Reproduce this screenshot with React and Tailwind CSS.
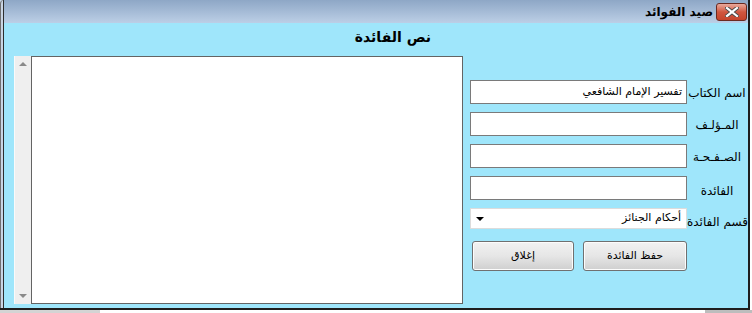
import React from 'react';

const font = { fontFamily: '"DejaVu Sans", "Noto Sans", sans-serif' };

function CloseButton() {
  return (
    <div className="w-[31px] h-[18px] rounded-[3px] border border-[#6b2a20] bg-linear-to-b from-[#e9a99c] via-[#d0563f] to-[#c4442c] flex items-center justify-center">
      <svg width="14" height="10" viewBox="0 0 14 10">
        <path d="M2 1 L12 9 M12 1 L2 9" stroke="#4a4a4a" strokeWidth="4" strokeLinecap="square" />
        <path d="M2 1 L12 9 M12 1 L2 9" stroke="#ffffff" strokeWidth="2.2" strokeLinecap="square" />
      </svg>
    </div>
  );
}

function Field({ label, value, labelClass = '' }) {
  return (
    <div className="flex items-center h-[24px]">
      <div className="w-[217px] shrink-0 h-[24px] border border-[#7a7a7a] bg-white flex items-center justify-end pr-[4px] text-[11px] text-black">
        {value}
      </div>
      <div className={'flex-1 flex justify-center whitespace-nowrap text-[12px] text-black pt-[2px] ' + labelClass}>{label}</div>
    </div>
  );
}

function WinButton({ children, className = '' }) {
  return (
    <div className={'h-[30px] rounded-[3px] border border-[#707070] flex items-center justify-center text-[11px] text-black bg-linear-to-b from-[#f2f2f2] via-[#e6e6e6] to-[#cfcfcf] shadow-[inset_0_0_0_1px_#fcfcfc] ' + className}>
      {children}
    </div>
  );
}

export default function App() {
  return (
    <div className="w-[752px] h-[313px] bg-white overflow-hidden" style={font}>
      <div className="w-[750px] h-[310px] flex border-b-2 border-r-2 border-[#1e1e1e] bg-[#c7d6e8]">
        {/* left frame */}
        <div className="w-[4px] h-full border-l border-[#6f6f6f] bg-[#c9d5e4] border-r border-r-[#2d2d2d] rounded-tl-[4px]" />
        <div className="flex-1 flex flex-col">
          {/* title bar */}
          <div className="h-[23px] bg-linear-to-b from-[#8ea7c6] to-[#bccfe6] flex items-center justify-end pr-[1px]">
            <span className="text-[12px] font-bold text-black mr-[3px]">صيد الفوائد</span>
            <CloseButton />
          </div>
          {/* body */}
          <div className="flex-1 bg-[#9fe6fb] flex pl-[10px]">
            {/* text area column */}
            <div className="w-[449px] flex flex-col">
              <div className="h-[33px] flex items-end justify-end pr-[32px] pb-[8px] text-[14px] font-bold text-black">نص الفائدة</div>
              <div className="h-[248px] flex">
                <div className="w-[17px] h-full bg-[#efefef] border-l border-[#fafafa] flex flex-col items-center justify-between py-[6px]">
                  <div className="w-0 h-0 border-l-[4px] border-r-[4px] border-b-[4px] border-l-transparent border-r-transparent border-b-[#8a8a8a]" />
                  <div className="w-0 h-0 border-l-[4px] border-r-[4px] border-t-[4px] border-l-transparent border-r-transparent border-t-[#8a8a8a]" />
                </div>
                <div className="flex-1 h-full bg-white border border-[#646464]" />
              </div>
            </div>
            {/* form column */}
            <div className="w-[277px] ml-[7px] flex flex-col pt-[57px]">
              <div className="flex flex-col gap-[8px]">
                <Field label="اسم الكتاب" value="تفسير الإمام الشافعي" />
                <Field label="المـؤلـف" />
                <Field label="الصـفـحـة" />
                <Field label="الفائدة" labelClass="pt-[6px]" />
              </div>
              <div className="flex items-center h-[21px] mt-[8px]">
                <div className="w-[217px] shrink-0 h-[21px] border border-[#dcdcdc] bg-white flex items-center justify-between px-[5px] text-[11px] text-black">
                  <div className="w-0 h-0 border-l-[4px] border-r-[4px] border-t-[4px] border-l-transparent border-r-transparent border-t-black" />
                  <span>أحكام الجنائز</span>
                </div>
                <div className="flex-1 flex justify-center whitespace-nowrap text-[12px] text-black pt-[6px]">قسم الفائدة</div>
              </div>
              <div className="flex mt-[12px] pl-[2px]">
                <WinButton className="w-[102px]">إغلاق</WinButton>
                <WinButton className="w-[104px] ml-[9px]">حفظ الفائدة</WinButton>
              </div>
            </div>
          </div>
        </div>
      </div>
      <div className="flex h-[3px]">
        <div className="w-[100px] bg-[#d4d4d4]" />
        <div className="w-[605px] bg-white" />
        <div className="flex-1 bg-[#bdbdbd]" />
      </div>
    </div>
  );
}
